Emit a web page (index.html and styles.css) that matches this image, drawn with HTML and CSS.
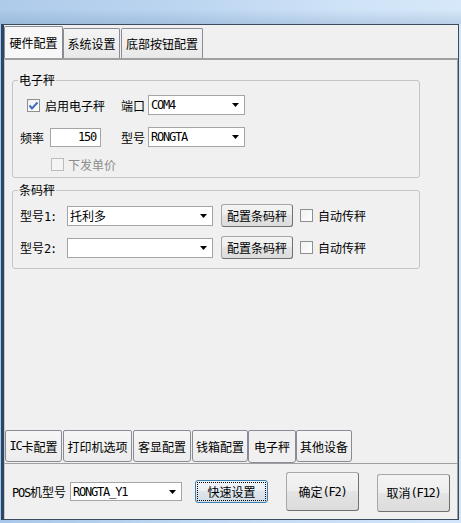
FILE: index.html
```html
<!DOCTYPE html>
<html>
<head>
    <meta charset="utf-8">
    <link rel="stylesheet" href="styles.css">
</head>
<body>

<div class="sky"></div>

<div class="win">

    <div class="ttabs">
        <div class="ttab on w1">硬件配置</div>
        <div class="ttab w2">系统设置</div>
        <div class="ttab w3">底部按钮配置</div>
    </div>

    <div class="page">

        <fieldset class="grp scale">
            <legend>电子秤</legend>
            <div class="row">
                <div class="c1">
                    <span class="cb ml7"><svg width="11" height="11" viewBox="0 0 11 11"><path d="M1.5 5.5 L4 8.5 L9.5 2.5" fill="none" stroke="#3d6fc0" stroke-width="2"/></svg></span>
                    <span class="ml5">启用电子秤</span>
                </div>
                <span class="lbl">端口</span>
                <div class="sel w97"><span class="lat">COM4</span><svg class="arr" width="7" height="4" viewBox="0 0 7 4"><polygon points="0,0 7,0 3.5,4" fill="#000"/></svg></div>
            </div>
            <div class="row mt12">
                <div class="c1">
                    <span>频率</span>
                    <div class="num"><span class="lat">150</span></div>
                </div>
                <span class="lbl">型号</span>
                <div class="sel w97"><span class="lat">RONGTA</span><svg class="arr" width="7" height="4" viewBox="0 0 7 4"><polygon points="0,0 7,0 3.5,4" fill="#000"/></svg></div>
            </div>
            <div class="row mt7">
                <div class="c1">
                    <span class="cb off ml31"></span>
                    <span class="dis ml4">下发单价</span>
                </div>
            </div>
        </fieldset>

        <fieldset class="grp barcode">
            <legend>条码秤</legend>
            <div class="row tall">
                <span class="blbl">型号<span class="lat">1:</span></span>
                <div class="sel w146">托利多<svg class="arr" width="7" height="4" viewBox="0 0 7 4"><polygon points="0,0 7,0 3.5,4" fill="#000"/></svg></div>
                <div class="btn cfg">配置条码秤</div>
                <span class="cb ml7"></span>
                <span class="ml5">自动传秤</span>
            </div>
            <div class="row tall mt9">
                <span class="blbl">型号<span class="lat">2:</span></span>
                <div class="sel w146"><svg class="arr" width="7" height="4" viewBox="0 0 7 4"><polygon points="0,0 7,0 3.5,4" fill="#000"/></svg></div>
                <div class="btn cfg">配置条码秤</div>
                <span class="cb ml7"></span>
                <span class="ml5">自动传秤</span>
            </div>
        </fieldset>

        <div class="btabs">
            <div class="btab bw1"><span class="lat">IC</span>卡配置</div>
            <div class="btab bw2">打印机选项</div>
            <div class="btab bw3">客显配置</div>
            <div class="btab bw4">钱箱配置</div>
            <div class="btab on bw5">电子秤</div>
            <div class="btab bw6">其他设备</div>
        </div>

    </div>

    <div class="foot">
        <span class="plbl"><span class="lat">POS</span>机型号</span>
        <div class="sel w112"><span class="lat">RONGTA_Y1</span><svg class="arr" width="7" height="4" viewBox="0 0 7 4"><polygon points="0,0 7,0 3.5,4" fill="#000"/></svg></div>
        <div class="btn quick">快速设置</div>
        <div class="btn big ok">确定<span class="lat">(F2)</span></div>
        <div class="btn big cancel">取消<span class="lat">(F12)</span></div>
    </div>

</div>

</body>
</html>
```

FILE: styles.css
```css
body {
    margin: 0;
    width: 461px;
    height: 523px;
    overflow: hidden;
    background: linear-gradient(90deg, #a9c7e9, #c4dbf4 55%, #d3e6f9);
    font-family: "Noto Sans CJK SC", sans-serif;
    font-size: 12px;
    color: #000;
}

.sky {
    height: 24px;
    background: linear-gradient(180deg, rgba(255,255,255,0) 40%, rgba(60,100,150,0.18)),
                linear-gradient(90deg, #aecbea, #bcd5f0 40%, #cfe3f7 75%, #d6e8f9);
}

.win {
    margin-left: 1px;
    width: 454px;
    height: 494px;
    border: 1px solid #3b4b5e;
    border-left: 3px solid #2b4666;
    background: #f0f0f0;
    display: flex;
    flex-direction: column;
}

/* top tabs */
.ttabs {
    height: 33px;
    display: flex;
    align-items: flex-end;
}

.ttab {
    height: 30px;
    box-sizing: border-box;
    border: 1px solid #898c95;
    border-bottom: none;
    border-radius: 2px 2px 0 0;
    background: linear-gradient(#f4f4f4, #e9e9e9);
    display: flex;
    align-items: center;
    justify-content: center;
}

.ttab.on {
    height: 32px;
    background: #f7f7f7;
}

.w1 { width: 59px; }
.w2 { width: 57px; }
.w3 { width: 82px; margin-left: 1px; }

.page {
    flex: 1;
    border-top: 2px solid #a0a0a0;
    border-left: 1px solid #c8c8c8;
    border-right: 1px solid #a0a0a0;
    display: flex;
    flex-direction: column;
}

/* group boxes */
.grp {
    min-width: 0;
    width: 408px;
    box-sizing: border-box;
    margin: 12px 0 0 7px;
    padding: 7px 0 3px 7px;
    border: 1px solid #c5c5c5;
    border-radius: 3px;
}

.grp legend {
    line-height: 16px;
    padding: 0 1px;
    margin-left: -2px;
}

.barcode {
    margin-top: 4px;
    padding: 6px 0 9px 7px;
}

.row {
    height: 20px;
    display: flex;
    align-items: center;
}

.row.tall { height: 23px; }

.mt12 { margin-top: 12px; }
.mt9 { margin-top: 9px; }
.mt7 { margin-top: 7px; }
.ml31 { margin-left: 31px; }
.ml7 { margin-left: 7px; }
.ml5 { margin-left: 5px; }
.ml4 { margin-left: 4px; }

.c1 {
    width: 101px;
    display: flex;
    align-items: center;
}

.lbl { width: 27px; }
.blbl { width: 47px; }

.lat {
    font-family: "DejaVu Sans Mono", monospace;
    font-size: 12px;
    letter-spacing: -1.2px;
}

.cb {
    width: 13px;
    height: 13px;
    box-sizing: border-box;
    border: 1px solid #8e8f8f;
    background: linear-gradient(135deg, #f0f0f0, #ffffff);
    display: flex;
    align-items: center;
    justify-content: center;
    flex: none;
}

.cb.off {
    border-color: #bcbcbc;
    background: #f4f4f4;
}

.dis { color: #8d8d8d; }

.sel {
    height: 20px;
    box-sizing: border-box;
    border: 1px solid #a5a5a5;
    background: #fff;
    display: flex;
    align-items: center;
    padding: 0 5px 0 2px;
}

.sel .arr { margin-left: auto; }

.w97 { width: 97px; }
.w146 { width: 146px; }
.w112 { width: 112px; height: 19px; }

.num {
    width: 51px;
    height: 19px;
    box-sizing: border-box;
    margin-left: 6px;
    border: 1px solid #a5a5a5;
    background: #fff;
    display: flex;
    align-items: center;
    justify-content: flex-end;
    padding-right: 4px;
}

/* buttons */
.btn {
    box-sizing: border-box;
    border: 1px solid #707070;
    border-top-color: #a8a8a8;
    border-left-color: #a8a8a8;
    border-radius: 3px;
    background: linear-gradient(#f4f4f4, #ededed 50%, #e4e4e4 50%, #dcdcdc);
    display: flex;
    align-items: center;
    justify-content: center;
    flex: none;
}

.cfg {
    width: 72px;
    height: 23px;
    margin-left: 8px;
}

.quick {
    width: 73px;
    height: 23px;
    margin-left: 13px;
    border-color: #3c7fb1;
    outline: 1px dotted #000;
    outline-offset: -3px;
    background: linear-gradient(#f2f5f8, #e9eef3 50%, #dee5ec 50%, #d6dee6);
}

.big {
    width: 73px;
    height: 39px;
    margin-left: 18px;
}

.cancel { height: 38px; margin-top: 2px; }

/* bottom tabs */
.btabs {
    margin-top: auto;
    height: 33px;
    display: flex;
    align-items: flex-start;
}

.btab {
    height: 32px;
    box-sizing: border-box;
    border: 1px solid #898c95;
    border-radius: 2px 2px 3px 3px;
    background: linear-gradient(#f6f6f6, #ececec);
    display: flex;
    align-items: center;
    justify-content: center;
}

.btab.on {
    height: 33px;
    background: #f0f0f0;
}

.bw1 { width: 57px; }
.bw2 { width: 69px; margin-left: 1px; }
.bw3 { width: 58px; margin-left: 1px; }
.bw4 { width: 56px; margin-left: 1px; }
.bw5 { width: 48px; }
.bw6 { width: 56px; }

.foot {
    height: 56px;
    box-sizing: border-box;
    border-top: 1px solid #a0a0a0;
    border-left: 1px solid #c8c8c8;
    border-right: 1px solid #a0a0a0;
    display: flex;
    align-items: center;
}

.plbl {
    width: 58px;
    margin-left: 7px;
}
```
